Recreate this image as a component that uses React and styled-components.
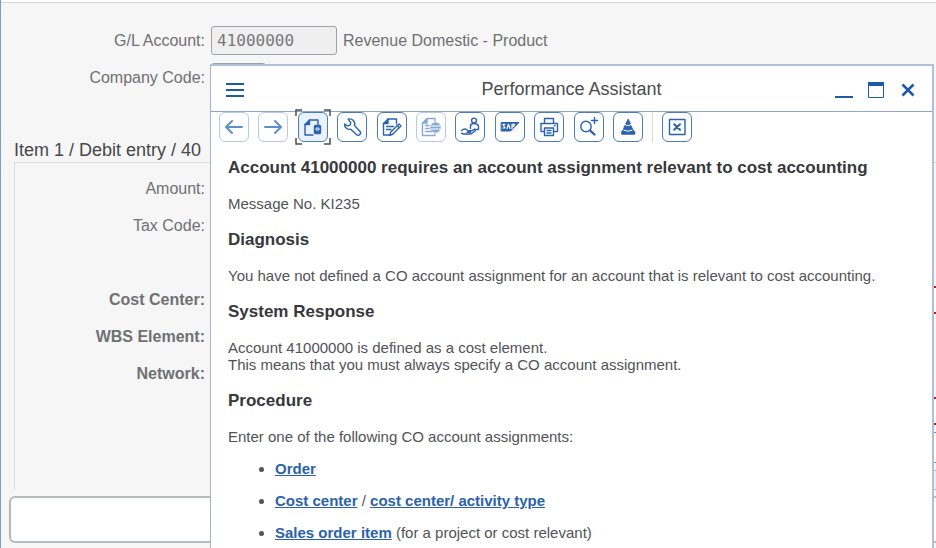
import React from "react";
import styled, { createGlobalStyle } from "styled-components";

const Global = createGlobalStyle`
  *, *::before, *::after { box-sizing: border-box; }
  body { margin: 0; overflow: hidden; }
  body, button, input { font-family: "Liberation Sans", Arial, sans-serif; }
`;

const Page = styled.main`
  position: relative;
  min-height: 100vh;
  overflow: hidden;
  background: #f6f6f6;
  border-left: 1px solid #7f9ac6;
  font-size: 16px;
  color: #6f7173;
`;

const TopEdge = styled.div`
  height: 3px;
  background: #fcfcfc;
  border-bottom: 1px solid #d6d8da;
`;

const Form = styled.form`
  display: flex;
  flex-direction: column;
  padding-top: 19px;
`;

const Row = styled.div`
  display: grid;
  grid-template-columns: ${(p) => (p.$nested ? 190 : 204)}px auto 1fr;
  column-gap: 6px;
  align-items: center;
  height: ${(p) => (p.$short ? 24 : 37)}px;
`;

const Label = styled.label`
  text-align: right;
  line-height: 20px;
  font-weight: ${(p) => (p.$strong ? 700 : 400)};
`;

const Field = styled.input`
  width: ${(p) => p.$width}px;
  height: 29px;
  padding: 0 5px;
  border: 1px solid #9da3aa;
  border-radius: 3px;
  background: #efefef;
  color: #77797b;
  font: 16px "DejaVu Sans Mono", monospace;
`;

const edgeTones = {
  error: { colour: "#c01c24", width: 2, height: 28, fill: "#ffffff" },
  action: { colour: "#6c90c8", width: 1, height: 31, fill: "#ffffff" },
  muted: { colour: "#b4b6b9", width: 1, height: 20, fill: "#efefef" },
};

const EndField = styled.input`
  justify-self: end;
  align-self: ${(p) => (p.$tone === "muted" ? "end" : "center")};
  grid-column: 3;
  width: 120px;
  height: ${(p) => edgeTones[p.$tone].height}px;
  border: ${(p) => edgeTones[p.$tone].width}px solid ${(p) => edgeTones[p.$tone].colour};
  border-right: 0;
  background: ${(p) => edgeTones[p.$tone].fill};
`;

const SectionTitle = styled.h2`
  margin: 42px 0 0 13px;
  font-size: 18px;
  line-height: 24px;
  font-weight: 400;
  color: #45474a;
`;

const Section = styled.section`
  margin-left: 13px;
  padding-top: 7px;
  border: 1px solid #dcdddf;
  border-right: 0;
  border-bottom: 0;
`;

const NoteBar = styled.input`
  display: block;
  width: calc(100% - 8px);
  height: 47px;
  margin: 6px 0 5px 8px;
  border: 2px solid #b5babf;
  border-right: 0;
  border-radius: 6px 0 0 6px;
  background: #ffffff;
`;

const Dialog = styled.div`
  position: absolute;
  inset: 64px 2px 0 209px;
  display: flex;
  flex-direction: column;
  background: #ffffff;
  border: 2px solid #b0c0d8;
  border-left: 1px solid #9fb4d2;
  border-bottom: 0;
`;

const DialogHeader = styled.header`
  display: grid;
  grid-template-columns: 110px 1fr 110px;
  align-items: center;
  flex: none;
  height: 46px;
  padding: 0 9px;
  border-bottom: 1px solid #8fa6c8;
`;

const DialogTitle = styled.h1`
  margin: 0;
  font-size: 18px;
  line-height: 24px;
  font-weight: 400;
  text-align: center;
  color: #4a4c4f;
`;

const HeaderActions = styled.div`
  display: flex;
  justify-content: ${(p) => (p.$end ? "flex-end" : "flex-start")};
  gap: 2px;
`;

const PlainButton = styled.button`
  display: grid;
  place-items: center;
  width: 30px;
  height: 30px;
  padding: 0;
  border: 0;
  background: transparent;
  color: #1f5aa8;
`;

const Toolbar = styled.div`
  display: flex;
  align-items: center;
  flex: none;
  gap: 9px;
  padding-left: 8px;
`;

const ToolGroup = styled.div`
  display: flex;
  justify-content: space-between;
  width: 424px;
`;

const ToolButton = styled.button`
  position: relative;
  width: 30px;
  height: 30px;
  padding: 0;
  border: 1px solid ${(p) => (p.$soft ? "#b3cae8" : "#4a7cbf")};
  border-radius: 6px;
  background: ${(p) => (p.$focused ? "#e8f1fc" : "#ffffff")};
  color: ${(p) => (p.$faded ? "#86a9d7" : p.$soft ? "#5f8fca" : "#2a63ae")};
`;

const ToolIcon = styled.svg`
  display: block;
  margin: -1px;
  fill: none;
  stroke: currentColor;
  stroke-width: 1.4;
  stroke-linecap: round;
  stroke-linejoin: round;
`;

const FocusCorners = styled.svg`
  position: absolute;
  inset: -4px;
  fill: none;
  stroke: #4c4f52;
  stroke-width: 1.5;
`;

const Divider = styled.span`
  width: 1px;
  height: 30px;
  background: #d9dbdd;
`;

const Article = styled.article`
  padding: 17px 17px 0;
  font-size: 15px;
  line-height: 17px;
  color: #515356;
`;

const Heading = styled.h2`
  margin: ${(p) => (p.$first ? 0 : 19)}px 0 18px;
  font-size: 17px;
  line-height: 18px;
  font-weight: 700;
  color: #36383b;
`;

const Text = styled.p`
  margin: 0;
`;

const Links = styled.ul`
  margin: 0;
  padding-left: 47px;
`;

const LinkItem = styled.li`
  margin-top: 15px;
`;

const Link = styled.a`
  color: #2c62a9;
  font-weight: 700;
  text-decoration: underline;
`;

const icons = {
  back: <path strokeWidth="2" d="M23 15H7m6-6-6 6 6 6" />,
  forward: <path strokeWidth="2" d="M7 15h16m-6-6 6 6-6 6" />,
  appHelp: (
    <>
      <path d="M11.5 8H20v5M15 23H7V12.5" />
      <path fill="currentColor" d="M7 12.5 11.5 8v4.5z" />
      <rect fill="currentColor" x="16.5" y="13.5" width="6" height="8" rx="1" />
      <path stroke="#e8f1fc" strokeWidth="1" d="M18.5 16h2.5v2h-2.5z" />
    </>
  ),
  wrench: <path d="M11.2 7.2a5 5 0 0 1 6.3 6.3l5.3 5.7a2.4 2.4 0 0 1-3.4 3.4l-5.6-5.4a5 5 0 0 1-6.3-5.2l3.2 1.8 2.5-.7.6-2.5z" />,
  edit: (
    <>
      <path d="M11 7h8.500v5M12 23H6.500V11.500M9.500 14.500h7m-7 3H14" />
      <path fill="currentColor" d="M6.500 11.500 11 7v4.500z" />
      <path d="m22 12 2 2-8 8-3.500 1.500 1.300-3.500zM20.500 14l1.800 1.800" />
    </>
  ),
  web: (
    <>
      <path d="M11 6.500h8V9M19 22v1.500H6.500V11M9.500 13.500H13m-3.500 3H13m-3.500 3h6" />
      <path fill="currentColor" d="M6.500 11 11 6.500V11z" />
      <circle cx="19.500" cy="15.500" r="4.500" fill="currentColor" />
      <path stroke="#ffffff" strokeWidth="1" d="M15.500 14h8m-8 3h8" />
    </>
  ),
  support: (
    <>
      <circle cx="19" cy="8.500" r="2.400" />
      <path d="M15.500 16.500V14q0-2.500 3.500-2.500t4.500 2.500v3.500H20" />
      <path d="M6.500 18.500q3-2.500 5-1l2 1.300h3l3-1.500q1.500.2.500 1.700l-4 3H8.500l-2-.8M12 20.200h3.500" />
    </>
  ),
  vendor: (
    <>
      <path fill="currentColor" strokeWidth="1" d="M6.500 10.500h17.500l-8.500 8.500h-9z" />
      <path stroke="#ffffff" strokeWidth="1.200" d="M10 12.300H8l2 3.700H8m4 .500 1.500-4.200 1.500 4.200m2 0v-4.200h2.500l-.800 2H17" />
    </>
  ),
  print: (
    <>
      <path d="M10.500 11.500v-5h9v5M10.500 19.500H7v-8h16.500v8h-4" />
      <path d="M10.500 16h9v7.500h-9zM13 18.500h4m-4 2.500h4" />
      <path d="M20.500 13.700h.5" />
    </>
  ),
  zoom: (
    <>
      <circle cx="12" cy="14.500" r="5.200" />
      <path d="M20.500 5.500v6m-3-3h6" />
      <path strokeWidth="2.300" d="m16.500 18.800 4 3.700" />
    </>
  ),
  glossary: (
    <>
      <path fill="currentColor" strokeWidth="1" d="m15 7.500-2.200 4.500q2.200 1.200 4.400 0z" />
      <path fill="currentColor" strokeWidth="1" d="M12 13.800q3 1.500 6 0l2 4.200 1.800 1.800v2.400H8.700v-2.400L10.200 18z" />
      <path stroke="#ffffff" strokeWidth="1" d="M11 18.300q4 2 8 0" />
    </>
  ),
  exit: (
    <>
      <path d="M7.500 7.500h15.500v15H7.500z" />
      <path strokeWidth="2" d="m12.200 12.200 5.800 5.600m0-5.600-5.800 5.600" />
    </>
  ),
};

const tools = [
  { icon: "back", label: "Back", soft: true },
  { icon: "forward", label: "Forward", soft: true },
  { icon: "appHelp", label: "Application help", focused: true },
  { icon: "wrench", label: "Customizing" },
  { icon: "edit", label: "Edit document" },
  { icon: "web", label: "Web document", soft: true, faded: true },
  { icon: "support", label: "Support" },
  { icon: "vendor", label: "SAP" },
  { icon: "print", label: "Print" },
  { icon: "zoom", label: "Zoom in" },
  { icon: "glossary", label: "Technical information" },
];

function Tool({ icon, label, soft, faded, focused }) {
  return (
    <ToolButton type="button" aria-label={label} $soft={soft} $faded={faded} $focused={focused}>
      <ToolIcon width="30" height="30" viewBox="0 0 30 30">{icons[icon]}</ToolIcon>
      {focused && (
        <FocusCorners width="36" height="36" viewBox="0 0 36 36">
          <path d="M1 7V1h6M29 1h6v6M35 29v6h-6M7 35H1v-6" />
        </FocusCorners>
      )}
    </ToolButton>
  );
}

const itemRows = [
  { id: "amount", label: "Amount:" },
  { id: "tax", label: "Tax Code:" },
  { id: "blank" },
  { id: "cost", label: "Cost Center:", strong: true, end: "error" },
  { id: "wbs", label: "WBS Element:", strong: true },
  { id: "network", label: "Network:", strong: true },
  { id: "profit", end: "error" },
  { id: "more", end: "action" },
  { id: "date", end: "muted", short: true },
];

export default function App() {
  return (
    <>
      <Global />
      <Page>
        <TopEdge />
        <Form>
          <Row>
            <Label htmlFor="gl">G/L Account:</Label>
            <Field id="gl" $width={126} defaultValue="41000000" readOnly />
            <span>Revenue Domestic - Product</span>
          </Row>
          <Row>
            <Label htmlFor="company">Company Code:</Label>
            <Field id="company" $width={55} readOnly />
          </Row>
          <SectionTitle>Item 1 / Debit entry / 40</SectionTitle>
          <Section>
            {itemRows.map((r) => (
              <Row key={r.id} $nested $short={r.short}>
                {r.label && <Label htmlFor={r.id} $strong={r.strong}>{r.label}</Label>}
                {r.label && <Field id={r.id} $width={126} />}
                {r.end && <EndField aria-label={r.id} $tone={r.end} />}
              </Row>
            ))}
          </Section>
          <NoteBar aria-label="Message" />
        </Form>

        <Dialog role="dialog" aria-labelledby="assistant-title">
          <DialogHeader>
            <HeaderActions>
              <PlainButton type="button" aria-label="Menu">
                <svg width="20" height="20" viewBox="0 0 20 20" stroke="currentColor" strokeWidth="2">
                  <path d="M1 5h18M1 11h18M1 17h18" />
                </svg>
              </PlainButton>
            </HeaderActions>
            <DialogTitle id="assistant-title">Performance Assistant</DialogTitle>
            <HeaderActions $end>
              <PlainButton type="button" aria-label="Minimize">
                <svg width="20" height="20" viewBox="0 0 20 20" stroke="currentColor" strokeWidth="2">
                  <path d="M1 18h18" />
                </svg>
              </PlainButton>
              <PlainButton type="button" aria-label="Maximize">
                <svg width="20" height="20" viewBox="0 0 20 20" fill="none" stroke="currentColor">
                  <path d="M2.500 3.500h15v15h-15z" />
                  <path strokeWidth="4" d="M2 5h16" />
                </svg>
              </PlainButton>
              <PlainButton type="button" aria-label="Close">
                <svg width="20" height="20" viewBox="0 0 20 20" stroke="currentColor" strokeWidth="2.500">
                  <path d="m4.500 5.500 11 11M15.500 5.500l-11 11" />
                </svg>
              </PlainButton>
            </HeaderActions>
          </DialogHeader>

          <Toolbar>
            <ToolGroup>
              {tools.map((t) => (
                <Tool key={t.icon} {...t} />
              ))}
            </ToolGroup>
            <Divider />
            <Tool icon="exit" label="Exit assistant" />
          </Toolbar>

          <Article>
            <Heading $first>Account 41000000 requires an account assignment relevant to cost accounting</Heading>
            <Text>Message No. KI235</Text>
            <Heading>Diagnosis</Heading>
            <Text>You have not defined a CO account assignment for an account that is relevant to cost accounting.</Text>
            <Heading>System Response</Heading>
            <Text>
              Account 41000000 is defined as a cost element.
              <br />
              This means that you must always specify a CO account assignment.
            </Text>
            <Heading>Procedure</Heading>
            <Text>Enter one of the following CO account assignments:</Text>
            <Links>
              <LinkItem><Link href="#order">Order</Link></LinkItem>
              <LinkItem>
                <Link href="#cost-center">Cost center</Link> / <Link href="#activity">cost center/ activity type</Link>
              </LinkItem>
              <LinkItem><Link href="#sales">Sales order item</Link> (for a project or cost relevant)</LinkItem>
            </Links>
          </Article>
        </Dialog>
      </Page>
    </>
  );
}
